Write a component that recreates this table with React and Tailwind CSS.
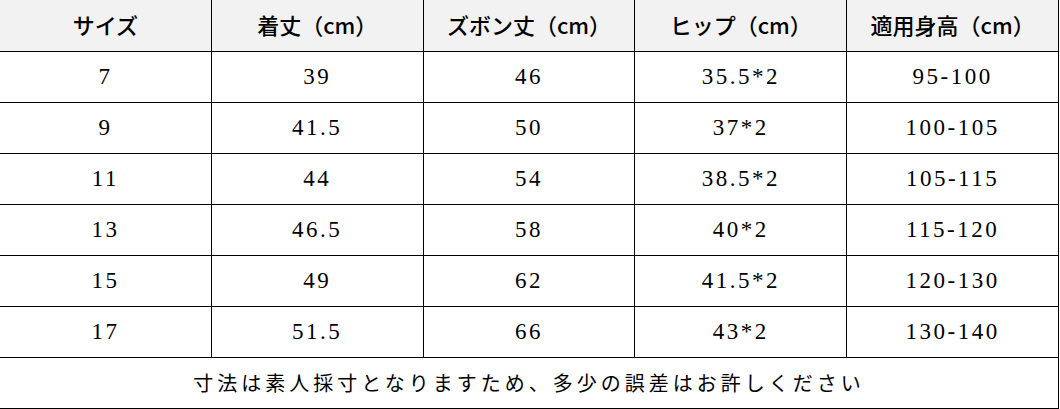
import React from "react";

const headers = ["サイズ", "着丈（cm）", "ズボン丈（cm）", "ヒップ（cm）", "適用身高（cm）"];
const rows = [
  ["7", "39", "46", "35.5*2", "95-100"],
  ["9", "41.5", "50", "37*2", "100-105"],
  ["11", "44", "54", "38.5*2", "105-115"],
  ["13", "46.5", "58", "40*2", "115-120"],
  ["15", "49", "62", "41.5*2", "120-130"],
  ["17", "51.5", "66", "43*2", "130-140"],
];

export default function App() {
  return (
    <div className="w-[1060px] h-[409px] bg-white overflow-hidden">
      <div className="w-[1059px] grid grid-cols-5 text-black">
        {headers.map((h, i) => (
          <div
            key={"h" + i}
            className="h-[52px] bg-[#f2f2f2] border-r border-b border-black flex items-center justify-center pb-[2px] text-[22px] font-medium font-['Noto_Sans_CJK_JP']"
          >
            {h}
          </div>
        ))}
        {rows.map((r, ri) =>
          r.map((c, ci) => (
            <div
              key={ri + "-" + ci}
              className="h-[51px] border-r border-b border-black flex items-center justify-center text-[23px] tracking-[2.5px] font-['Liberation_Serif']"
            >
              {c}
            </div>
          ))
        )}
        <div className="col-span-5 h-[51px] border-r border-b border-black flex items-center justify-center text-[20px] tracking-[4px] font-['Noto_Sans_CJK_JP']">
          寸法は素人採寸となりますため、多少の誤差はお許しください
        </div>
      </div>
    </div>
  );
}
